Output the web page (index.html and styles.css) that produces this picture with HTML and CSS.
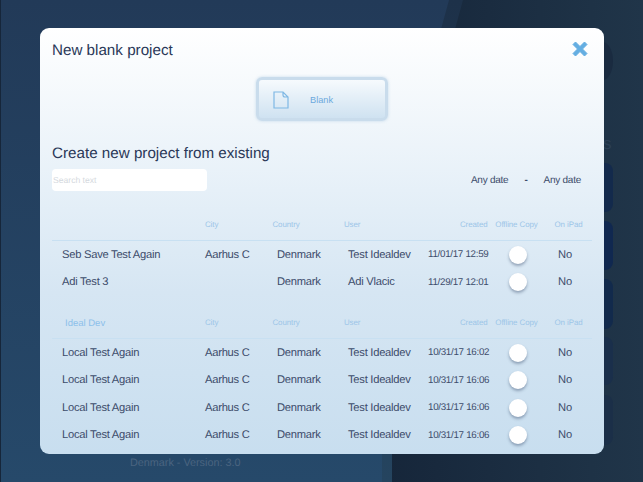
FILE: index.html
```html
<!DOCTYPE html>
<html lang="en">
<head>
  <meta charset="UTF-8"/>
  <meta name="viewport" content="width=device-width,initial-scale=1.0"/>
  <title>New project</title>
  <link rel="stylesheet" href="styles.css">
</head>
<body>
  <div class="bg-band"></div>
  <div class="bg-panel"></div>
  <div class="tile tile-a"></div>
  <div class="bg-letter">s</div>
  <div class="tile tile-b"></div>
  <div class="tile tile-c"></div>
  <div class="tile tile-d"></div>
  <div class="tile tile-e"></div>
  <div class="tile tile-f"></div>
  <div class="modal">
    <div class="modal-top">
      <h1>New blank project</h1>
      <svg class="close" width="16" height="16" viewBox="0 0 16 16"><path d="M1 3.5 3.5 1 8 5.5 12.500 1 15 3.500 10.500 8 15 12.500 12.500 15 8 10.500 3.500 15 1 12.500 5.500 8Z" fill="#64aee2" stroke="#64aee2" stroke-width="1" stroke-linejoin="round"/></svg>
    </div>
    <div class="blank-wrap">
      <button class="blank-btn">
        <svg width="16" height="18" viewBox="0 0 16 18"><path d="M1 1H10L15 6V17H1Z M10 1V4Q10 6 12 6H15" fill="none" stroke="#7fb8e4" stroke-width="1.2"/></svg>
        <span>Blank</span>
      </button>
    </div>
    <h2>Create new project from existing</h2>
    <div class="filters">
      <div class="search">Search text</div>
      <div class="dates"><span>Any date</span><span class="dash">-</span><span>Any date</span></div>
    </div>

    <div class="row head">
      <span class="c-name"></span><span class="c-city">City</span><span class="c-country">Country</span><span class="c-user">User</span><span class="c-created">Created</span><span class="c-copy">Offline Copy</span><span class="c-ipad">On iPad</span>
    </div>
    <div class="row item">
      <span class="c-name">Seb Save Test Again</span><span class="c-city">Aarhus C</span><span class="c-country">Denmark</span><span class="c-user">Test Idealdev</span><span class="c-created">11/01/17 12:59</span><span class="c-copy"><i class="knob"></i></span><span class="c-ipad">No</span>
    </div>
    <div class="row item">
      <span class="c-name">Adi Test 3</span><span class="c-city"></span><span class="c-country">Denmark</span><span class="c-user">Adi Vlacic</span><span class="c-created">11/29/17 12:01</span><span class="c-copy"><i class="knob"></i></span><span class="c-ipad">No</span>
    </div>

    <div class="row head second">
      <span class="c-name group">Ideal Dev</span><span class="c-city">City</span><span class="c-country">Country</span><span class="c-user">User</span><span class="c-created">Created</span><span class="c-copy">Offline Copy</span><span class="c-ipad">On iPad</span>
    </div>
    <div class="row item">
      <span class="c-name">Local Test Again</span><span class="c-city">Aarhus C</span><span class="c-country">Denmark</span><span class="c-user">Test Idealdev</span><span class="c-created">10/31/17 16:02</span><span class="c-copy"><i class="knob"></i></span><span class="c-ipad">No</span>
    </div>
    <div class="row item">
      <span class="c-name">Local Test Again</span><span class="c-city">Aarhus C</span><span class="c-country">Denmark</span><span class="c-user">Test Idealdev</span><span class="c-created">10/31/17 16:06</span><span class="c-copy"><i class="knob"></i></span><span class="c-ipad">No</span>
    </div>
    <div class="row item">
      <span class="c-name">Local Test Again</span><span class="c-city">Aarhus C</span><span class="c-country">Denmark</span><span class="c-user">Test Idealdev</span><span class="c-created">10/31/17 16:06</span><span class="c-copy"><i class="knob"></i></span><span class="c-ipad">No</span>
    </div>
    <div class="row item">
      <span class="c-name">Local Test Again</span><span class="c-city">Aarhus C</span><span class="c-country">Denmark</span><span class="c-user">Test Idealdev</span><span class="c-created">10/31/17 16:06</span><span class="c-copy"><i class="knob"></i></span><span class="c-ipad">No</span>
    </div>
  </div>
  <div class="version">Denmark - Version: 3.0</div>
</body>
</html>
```

FILE: styles.css
```css
*{margin:0;padding:0;box-sizing:border-box;}
html,body{height:482px;overflow:hidden;}
body{position:relative;font-family:'Liberation Sans',Arial,sans-serif;text-rendering:geometricPrecision;background:linear-gradient(90deg,#16263a 0%,#16263a 60%,#203549 100%);padding:28px 39px 0 40px;}

/* backdrop */
.bg-panel{position:absolute;inset:0;border-left:1px solid #16263a;background:linear-gradient(180deg,#223a58 0%,#26496a 100%);clip-path:polygon(0 0,449px 0,438px 40px,382px 440px,382px 482px,0 482px);}
.bg-band{position:absolute;inset:0;background:linear-gradient(180deg,#1d3149 0%,#25445f 100%);clip-path:polygon(0 0,463px 0,452px 40px,392px 440px,392px 482px,0 482px);}
.tile{position:absolute;left:592px;width:21px;border-radius:8px;background:#122a4c;}
.tile-a{top:42px;height:38px;border-radius:50%;background:#1a2b40;}
.tile-b{top:163px;height:49px;background:#132a4c;}
.tile-c{top:221px;height:49px;background:#102850;}
.tile-d{top:279px;height:50px;background:#122a4c;}
.tile-e{top:337px;height:48px;background:#1a2f4b;}
.tile-f{top:395px;height:50px;background:#1b2f48;}
.bg-letter{position:absolute;left:603px;top:134px;font-size:17px;color:#2b4056;}

.modal{position:relative;width:564px;height:426px;padding:0 12px;border-radius:9px;background:linear-gradient(180deg,#fff 0%,#e6f0f8 38%,#d6e6f3 62%,#c8deef 100%);}
.modal-top{display:flex;justify-content:space-between;align-items:flex-start;padding:14px 4px 0 0;height:49px;}
.close{margin-top:-1px;}
h1{font-size:15.2px;font-weight:400;color:#2a3858;line-height:18px;}
.blank-wrap{display:flex;justify-content:center;}
.blank-btn{display:flex;align-items:center;width:132px;height:44px;padding-left:14px;gap:21px;border:3px solid #c9dcec;border-radius:6px;background:linear-gradient(180deg,#f6fafd 0%,#cfe2f1 100%);box-shadow:0 0 3px rgba(150,190,220,.5);font:9.2px 'Liberation Sans',Arial,sans-serif;color:#6ba9dd;}
.blank-btn span{padding-top:2px;}
.blank-btn svg{margin-top:1px;}
h2{font-size:15.2px;font-weight:400;color:#2a3858;line-height:18px;margin-top:24px;}
.filters{display:flex;justify-content:space-between;align-items:center;margin-top:6px;height:22px;}
.search{width:155px;height:22px;border-radius:4px;background:#fff;font-size:8.6px;line-height:22px;padding-left:1px;color:#d5d9de;}
.dates{display:flex;gap:16px;font-size:10px;letter-spacing:-.25px;color:#3d4c6b;padding-right:11px;}
.dates .dash{font-weight:700;}

.row{display:flex;}
.head{height:50px;align-items:flex-end;padding-bottom:10px;font-size:7.9px;letter-spacing:-.08px;line-height:10px;color:#9cc5e8;border-bottom:1px solid #c8e0f2;}
.head.second{height:43px;}
.item{height:27.5px;align-items:center;font-size:11.2px;letter-spacing:-.26px;color:#3d4c6b;}
.c-name{width:153px;padding-left:10px;white-space:nowrap;}
.group{font-size:9.5px;letter-spacing:0;color:#8cc0ea;padding-left:13px;margin-bottom:-1px;}
.c-city{width:72px;}
.c-country{width:71px;}
.c-user{width:80px;}
.c-created{width:62px;font-size:9.8px;letter-spacing:-.3px;white-space:nowrap;}
.c-copy{width:56px;display:flex;justify-content:center;white-space:nowrap;}
.c-ipad{width:38px;text-align:center;white-space:nowrap;}
.head .c-city{width:67.500px;}
.head .c-country{width:71.500px;}
.head .c-user{width:84px;}
.head .c-created{width:59.500px;font-size:7.9px;letter-spacing:-.08px;text-align:right;}
.head .c-copy{width:58px;}
.head .c-ipad{width:37px;text-align:right;}
.knob{display:block;width:18px;height:18px;border-radius:50%;background:#fff;box-shadow:0 2px 3px rgba(60,80,110,.45);}

.version{position:relative;margin:3px 0 0 90px;font-size:10.800px;color:#4a6480;}
```
